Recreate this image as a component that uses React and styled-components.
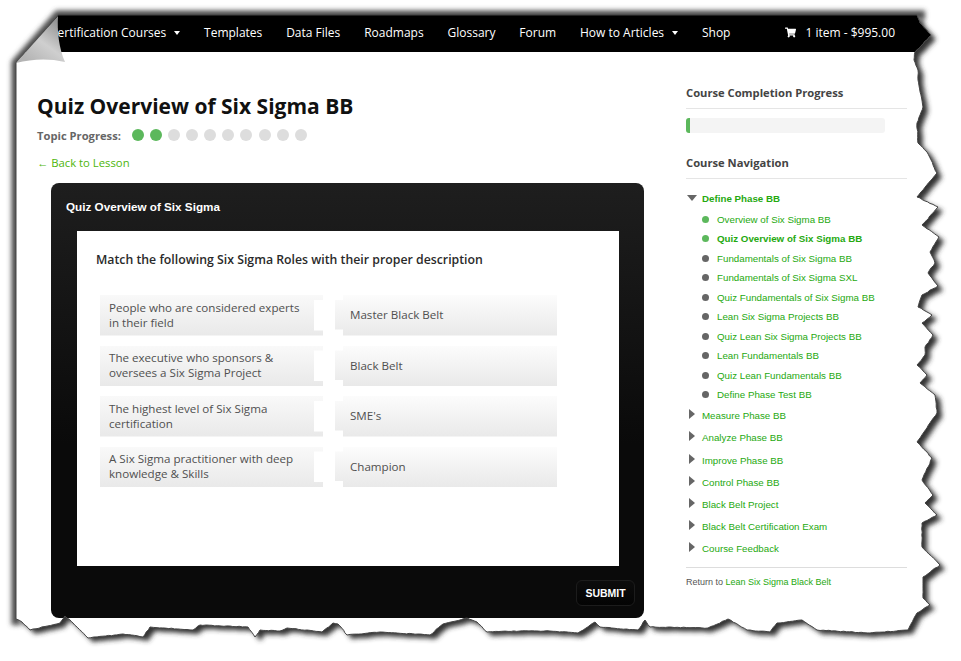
import React from 'react';
import styled, { createGlobalStyle } from 'styled-components';
import { FaShoppingCart } from 'react-icons/fa';

const GlobalStyle = createGlobalStyle`
  html, body { margin: 0; padding: 0; background: #fff; }
  * { box-sizing: border-box; }
`;

const GREEN = '#25a90f';

// hand traced outline of the torn sheet, clockwise from the folded corner
const TORN = [
  [58, 15], [917, 15], [920, 23], [931, 35], [915, 52], [914, 60], [918, 70], [918, 80], [923, 107], [917, 123],
  [918, 143], [927, 152], [937, 173], [917, 197], [938, 207], [922, 225], [939, 237], [930, 252], [935, 263],
  [928, 273], [938, 286], [922, 295], [918, 307], [932, 315], [922, 323], [933, 335], [925, 347], [925, 355],
  [917, 365], [927, 375], [920, 383], [935, 395], [937, 413], [917, 442], [932, 458], [922, 480], [933, 495],
  [925, 503], [937, 515], [922, 523], [922, 547], [940, 565], [923, 577], [923, 598], [930, 605], [917, 613],
  [908, 630], [870, 633], [817, 630], [802, 620], [777, 623], [770, 632], [747, 630], [728, 619], [708, 628],
  [650, 627], [645, 620], [638, 630], [600, 627], [595, 622], [578, 633], [550, 631], [520, 631], [487, 632],
  [477, 622], [467, 618], [443, 624], [430, 635], [380, 632], [347, 635], [338, 624], [333, 623], [322, 632],
  [287, 628], [280, 631], [260, 630], [255, 637], [248, 627], [200, 625], [193, 630], [150, 627], [143, 637],
  [123, 634], [88, 638], [73, 623], [65, 616], [60, 623], [30, 630], [22, 622], [16, 619], [16, 63],
];

const roughen = (points) => {
  let seed = 7;
  const rand = () => {
    seed = (seed * 16807) % 2147483647;
    return seed / 2147483647 - 0.5;
  };
  let d = `M${points[0].join(' ')}`;
  points.forEach((p, i) => {
    const next = points[(i + 1) % points.length];
    const len = Math.hypot(next[0] - p[0], next[1] - p[1]);
    // the straight edges of the sheet stay straight
    const straight = p[0] === next[0] && p[0] === 16 || p[1] === 15 && next[1] === 15 || next[0] === 58;
    const steps = straight ? 1 : Math.max(1, Math.round(len / 3));
    for (let s = 1; s <= steps; s++) {
      const t = s / steps;
      const wob = s === steps || straight ? 0 : 0.7;
      d += `L${(p[0] + (next[0] - p[0]) * t + rand() * wob).toFixed(1)} ${(p[1] + (next[1] - p[1]) * t + rand() * wob).toFixed(1)}`;
    }
  });
  return `${d}Z`;
};

const SHEET = roughen(TORN);

const TornEdge = () => (
  <Overlay width="961" height="661" viewBox="0 0 961 661">
    <defs>
      <clipPath id="outside">
        <path clipRule="evenodd" d={`M0 0H961V661H0Z${SHEET}`} />
      </clipPath>
      <filter id="soft" x="-5%" y="-5%" width="110%" height="110%">
        <feGaussianBlur stdDeviation="2.6" />
      </filter>
      <filter id="softer" x="-5%" y="-5%" width="110%" height="110%">
        <feGaussianBlur stdDeviation="2.6" />
      </filter>
      <linearGradient id="fold" x1="60" y1="20" x2="30" y2="62" gradientUnits="userSpaceOnUse">
        <stop offset="0" stopColor="#8d8d8d" />
        <stop offset="0.55" stopColor="#cfcfcf" />
        <stop offset="1" stopColor="#b4b4b4" />
      </linearGradient>
    </defs>
    <path d={`M0 0H961V661H0Z${SHEET}`} fillRule="evenodd" fill="#fff" />
    <g clipPath="url(#outside)">
      <path d={SHEET} fill="#333" transform="translate(5 4)" filter="url(#soft)" />
      <path d="M16 625V63L58 15H925" fill="none" stroke="#4a4a4a" strokeWidth="9" filter="url(#softer)" />
    </g>
    <path d={SHEET} fill="none" stroke="#444" strokeWidth="1" />
    <path d="M16 63L58 16C57 32 59 48 65 62C48 58 32 59 16 63Z" fill="url(#fold)" />
  </Overlay>
);

const Overlay = styled.svg`
  position: absolute;
  top: 0;
  left: 0;
  pointer-events: none;
`;

const Page = styled.div`
  position: relative;
  width: 961px;
  height: 661px;
  overflow: hidden;
  padding: 15px 0 0 16px;
  background: #fff;
  font-family: "Open Sans", sans-serif;
`;

const NavBar = styled.nav`
  display: flex;
  align-items: center;
  gap: 23.85px;
  height: 37px;
  padding: 0 66px 2px 34px;
  background: #000;
  color: #fff;
  font-size: 12px;
  white-space: nowrap;
`;

const NavItem = styled.span`
  display: flex;
  align-items: center;
  gap: 8px;
`;

const Caret = styled.i`
  width: 0;
  height: 0;
  border-left: 3.5px solid transparent;
  border-right: 3.5px solid transparent;
  border-top: 4px solid #fff;
`;

const Cart = styled.span`
  display: flex;
  align-items: center;
  gap: 9px;
  margin-left: auto;
  font-size: 12px;
`;

const Columns = styled.div`
  display: flex;
`;

const Main = styled.main`
  width: 653px;
  padding: 41px 0 0 21px;
`;

const Title = styled.h1`
  margin: 0;
  font-size: 21px;
  line-height: 27px;
  font-weight: 700;
  color: #111;
`;

const Topic = styled.div`
  display: flex;
  align-items: center;
  height: 14px;
  margin-top: 8px;
  font-size: 11.2px;
  font-weight: 700;
  color: #666;
`;

const Dots = styled.div`
  display: flex;
  gap: 6.1px;
  margin-left: 11px;
`;

const Dot = styled.i`
  width: 12px;
  height: 12px;
  border-radius: 50%;
  background: ${(p) => (p.$done ? '#5cb85c' : '#ddd')};
`;

const BackLink = styled.a`
  display: block;
  margin-top: 14px;
  font-size: 11.3px;
  line-height: 14px;
  color: #4db50a;
`;

const Player = styled.section`
  width: 593px;
  height: 435px;
  margin: 13px 0 0 14px;
  padding: 0 9px 0 26px;
  border-radius: 8px;
  background: linear-gradient(#1e1e1e, #0a0a0a 60%);
  display: flex;
  flex-direction: column;
`;

const PlayerTitle = styled.div`
  height: 48px;
  margin-left: -11px;
  font: 700 11.7px/48px "Liberation Sans", Arial, sans-serif;
  color: #fff;
`;

const Slide = styled.div`
  width: 542px;
  height: 335px;
  padding: 19px 0 0 19px;
  background: #fff;
`;

const Question = styled.div`
  font-size: 12.3px;
  line-height: 19px;
  font-weight: 600;
  color: #2a2a2a;
`;

const Pairs = styled.div`
  display: grid;
  grid-template-columns: 223px 222px;
  column-gap: 12px;
  grid-auto-rows: 40.5px;
  row-gap: 10px;
  margin: 26px 0 0 4px;
`;

const Term = styled.div`
  display: flex;
  align-items: center;
  padding: 0 20px 1px 9px;
  background: linear-gradient(#f9f9f9, #e9e9e9);
  font-size: 11.6px;
  line-height: 15px;
  color: #505050;
  clip-path: polygon(0 0, 100% 0, 100% 5px, calc(100% - 9px) 5px, calc(100% - 9px) calc(100% - 5px), 100% calc(100% - 5px), 100% 100%, 0 100%);
`;

const Answer = styled.div`
  display: flex;
  align-items: center;
  padding: 0 0 1px 15px;
  background: linear-gradient(#fcfcfc, #e9e9e9);
  font-size: 11.6px;
  color: #505050;
  clip-path: polygon(8px 0, 100% 0, 100% 100%, 8px 100%, 8px calc(100% - 6px), 0 calc(100% - 6px), 0 5px, 8px 5px);
`;

const PlayerFoot = styled.div`
  display: flex;
  justify-content: flex-end;
  margin-top: 14px;
`;

const Submit = styled.button`
  width: 59px;
  height: 26px;
  padding: 0;
  border: 1px solid #1c1c1c;
  border-radius: 6px;
  background: linear-gradient(#0c0c0c, #040404);
  color: #fff;
  font: 700 10.5px "Liberation Sans", Arial, sans-serif;
`;

const Sidebar = styled.aside`
  width: 221px;
  margin-left: 17px;
  padding-top: 33px;
  font-family: "Liberation Sans", Arial, sans-serif;
  font-size: 9.75px;
`;

const SideHead = styled.h3`
  margin: 0;
  height: 24px;
  border-bottom: 1px solid #e5e5e5;
  font: 700 11.2px/16px "Open Sans", sans-serif;
  color: #444;
`;

const Progress = styled.div`
  width: 199px;
  height: 15px;
  margin: 9px 0 22px;
  border-radius: 3px;
  background: #f4f4f4;
  overflow: hidden;
`;

const ProgressFill = styled.div`
  height: 100%;
  background: #5cb85c;
`;

const Tree = styled.div`
  padding-top: 8px;
`;

const PhaseRow = styled.div`
  display: flex;
  align-items: center;
  height: 22.2px;
  color: ${GREEN};
  font-weight: ${(p) => (p.$open ? 700 : 400)};
`;

const Arrow = styled.i`
  width: 16px;
  flex: none;
  padding-left: ${(p) => (p.$open ? 1 : 3)}px;
  &::before {
    content: '';
    display: block;
    width: 0;
    height: 0;
    ${(p) => (p.$open
      ? 'border-left: 5.5px solid transparent; border-right: 5.5px solid transparent; border-top: 6px solid #666;'
      : 'border-top: 5.5px solid transparent; border-bottom: 5.5px solid transparent; border-left: 6px solid #666; margin-top: -3px;')}
  }
`;

const Lessons = styled.div`
  padding: 0.4px 0 0 16px;
`;

const Lesson = styled.div`
  display: flex;
  align-items: center;
  gap: 8px;
  height: 19.5px;
  color: ${GREEN};
  font-weight: ${(p) => (p.$current ? 700 : 400)};
  &::before {
    content: '';
    width: 7px;
    height: 7px;
    border-radius: 50%;
    background: ${(p) => (p.$done ? '#5cb85c' : '#666')};
  }
`;

const ReturnTo = styled.div`
  margin-top: 7px;
  padding-top: 8px;
  border-top: 1px solid #ddd;
  line-height: 12px;
  font-size: 9px;
  color: #555;
  a { color: ${GREEN}; }
`;

const navLinks = ['Templates', 'Data Files', 'Roadmaps', 'Glossary', 'Forum'];

const pairs = [
  ['People who are considered experts in their field', 'Master Black Belt'],
  ['The executive who sponsors & oversees a Six Sigma Project', 'Black Belt'],
  ['The highest level of Six Sigma certification', "SME's"],
  ['A Six Sigma practitioner with deep knowledge & Skills', 'Champion'],
];

const lessons = [
  { name: 'Overview of Six Sigma BB', done: true },
  { name: 'Quiz Overview of Six Sigma BB', done: true, current: true },
  { name: 'Fundamentals of Six Sigma BB' },
  { name: 'Fundamentals of Six Sigma SXL' },
  { name: 'Quiz Fundamentals of Six Sigma BB' },
  { name: 'Lean Six Sigma Projects BB' },
  { name: 'Quiz Lean Six Sigma Projects BB' },
  { name: 'Lean Fundamentals BB' },
  { name: 'Quiz Lean Fundamentals BB' },
  { name: 'Define Phase Test BB' },
];

const phases = [
  'Measure Phase BB',
  'Analyze Phase BB',
  'Improve Phase BB',
  'Control Phase BB',
  'Black Belt Project',
  'Black Belt Certification Exam',
  'Course Feedback',
];

export default function App() {
  return (
    <Page>
      <GlobalStyle />
      <NavBar>
        <NavItem>Certification Courses <Caret /></NavItem>
        {navLinks.map((link) => <NavItem key={link}>{link}</NavItem>)}
        <NavItem>How to Articles <Caret /></NavItem>
        <NavItem>Shop</NavItem>
        <Cart><FaShoppingCart size={11} /> 1 item - $995.00</Cart>
      </NavBar>
      <Columns>
        <Main>
          <Title>Quiz Overview of Six Sigma BB</Title>
          <Topic>
            Topic Progress:
            <Dots>
              {Array.from({ length: 10 }, (_, i) => <Dot key={i} $done={i < 2} />)}
            </Dots>
          </Topic>
          <BackLink>← Back to Lesson</BackLink>
          <Player>
            <PlayerTitle>Quiz Overview of Six Sigma</PlayerTitle>
            <Slide>
              <Question>Match the following Six Sigma Roles with their proper description</Question>
              <Pairs>
                {pairs.map(([term, answer]) => (
                  <React.Fragment key={answer}>
                    <Term>{term}</Term>
                    <Answer>{answer}</Answer>
                  </React.Fragment>
                ))}
              </Pairs>
            </Slide>
            <PlayerFoot>
              <Submit>SUBMIT</Submit>
            </PlayerFoot>
          </Player>
        </Main>
        <Sidebar>
          <SideHead>Course Completion Progress</SideHead>
          <Progress>
            <ProgressFill style={{ width: '2%' }} />
          </Progress>
          <SideHead>Course Navigation</SideHead>
          <Tree>
            <PhaseRow $open><Arrow $open />Define Phase BB</PhaseRow>
            <Lessons>
              {lessons.map((l) => (
                <Lesson key={l.name} $done={l.done} $current={l.current}>{l.name}</Lesson>
              ))}
            </Lessons>
            {phases.map((name) => (
              <PhaseRow key={name}><Arrow />{name}</PhaseRow>
            ))}
          </Tree>
          <ReturnTo>Return to <a>Lean Six Sigma Black Belt</a></ReturnTo>
        </Sidebar>
      </Columns>
      <TornEdge />
    </Page>
  );
}
